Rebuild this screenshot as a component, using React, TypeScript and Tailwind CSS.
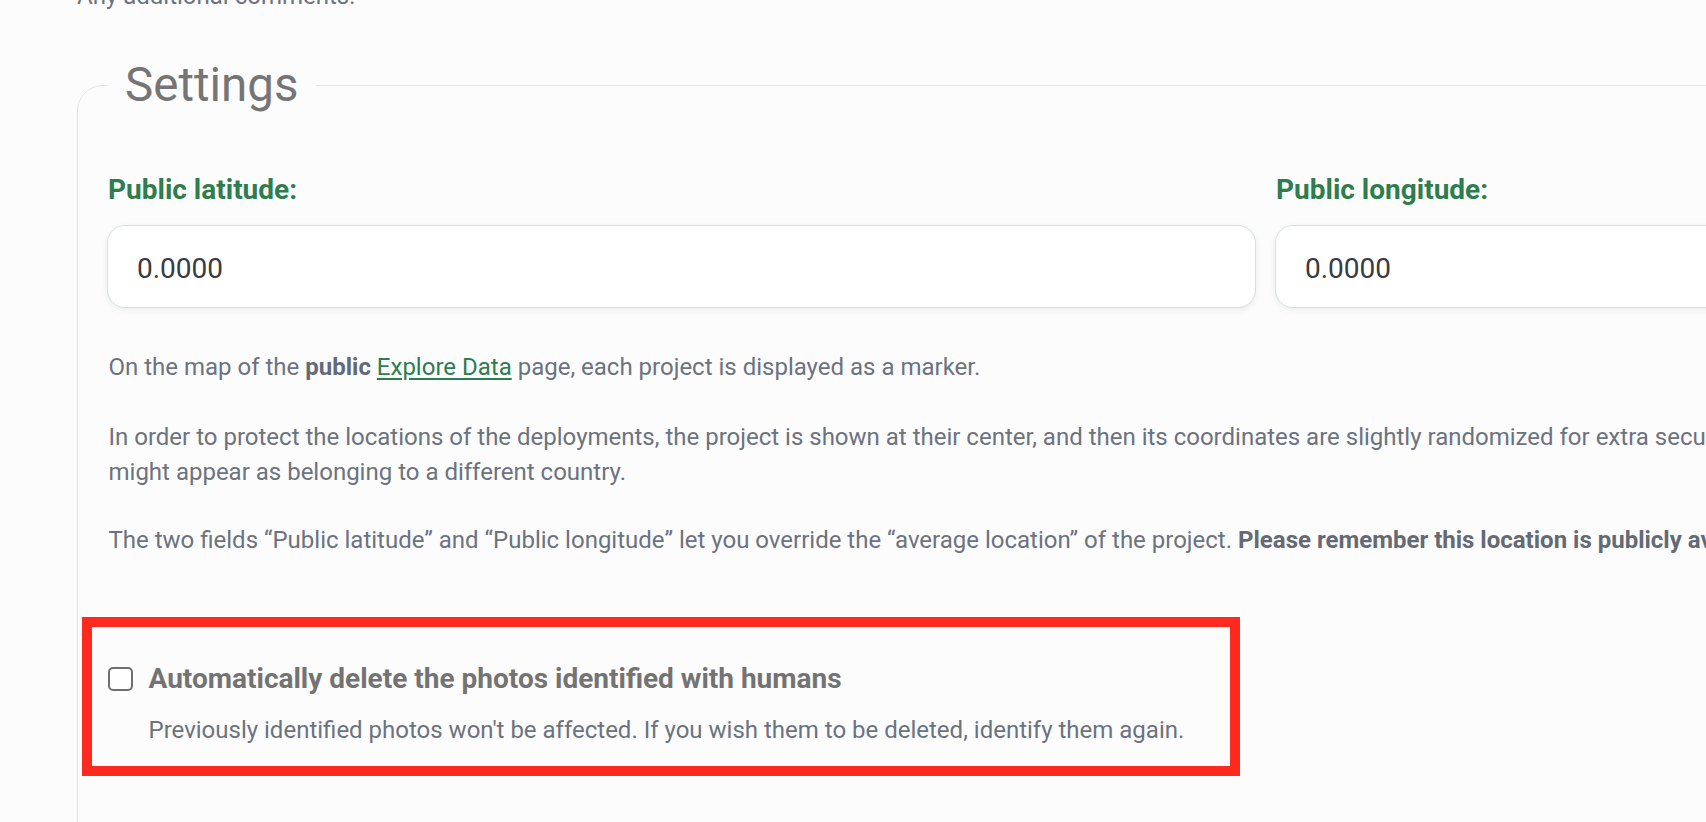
import React from "react";

export default function App() {
  return (
    <div className="w-[1706px] h-[822px] overflow-hidden bg-[#fcfcfc] font-['Roboto','Liberation_Sans',sans-serif]">
      <div className="w-[2600px] pl-[77px]">
        <div className="-mt-[21px] pl-0 text-[24px] leading-[35px] text-[#6b7280]">
          Any additional comments:
        </div>
        <fieldset className="mt-[42px] w-[2380px] border-[1.5px] border-[#e4e4e4] rounded-tl-[26px] pl-[29px] pr-[29px] pb-[200px]">
          <legend className="px-[18px] text-[47.5px] leading-[58px] font-normal text-[#757575]">
            Settings
          </legend>
          <div className="pt-[55px] grid grid-cols-2 gap-x-[19px] w-[2317px]">
            <div className="flex flex-col">
              <label className="pl-[1px] text-[28px] leading-[42px] font-bold text-[#2e7d4e]">
                Public latitude:
              </label>
              <div className="mt-[14px] h-[83px] rounded-[18px] border border-[#d3e2de] bg-white shadow-[0_2px_6px_rgba(0,0,0,0.07)] flex items-center pl-[29px] pt-[4px] text-[28px] text-[#3a3a3f]">
                0.0000
              </div>
            </div>
            <div className="flex flex-col">
              <label className="pl-[1px] text-[28px] leading-[42px] font-bold text-[#2e7d4e]">
                Public longitude:
              </label>
              <div className="mt-[14px] h-[83px] rounded-[18px] border border-[#d3e2de] bg-white shadow-[0_2px_6px_rgba(0,0,0,0.07)] flex items-center pl-[29px] pt-[4px] text-[28px] text-[#3a3a3f]">
                0.0000
              </div>
            </div>
          </div>
          <div className="pl-[1.5px] text-[24px] leading-[35px] text-[#6b7280]">
            <p className="mt-[42px]">
              On the map of the <strong className="font-bold text-[#636a75]">public</strong>{" "}
              <a href="#" className="text-[#2e7d4e] underline underline-offset-[3px]">
                Explore Data
              </a>{" "}
              page, each project is displayed as a marker.
            </p>
            <p className="mt-[35px] whitespace-nowrap">
              In order to protect the locations of the deployments, the project is shown at their center, and then its coordinates are slightly randomized for extra security. As a result, a project near a border
              <br />
              might appear as belonging to a different country.
            </p>
            <p className="mt-[33px] whitespace-nowrap">
              The two fields “Public latitude” and “Public longitude” let you override the “average location” of the project.{" "}
              <strong className="font-bold text-[#636a75]">Please remember this location is publicly available.</strong>
            </p>
          </div>
          <div className="relative mt-[103px]">
            <div className="flex items-center h-[35px]">
              <span className="ml-[0.5px] w-[25px] h-[24px] rounded-[5px] border-2 border-[#6f6f6f] bg-white shrink-0" />
              <span className="ml-[16px] text-[28px] leading-[35px] font-bold text-[#737373]">
                Automatically delete the photos identified with humans
              </span>
            </div>
            <p className="mt-[17px] pl-[41.5px] text-[24px] leading-[35px] text-[#6b7280]">
              Previously identified photos won't be affected. If you wish them to be deleted, identify them again.
            </p>
            <div className="absolute -top-[44.5px] -left-[25.5px] w-[1158px] h-[159px] border-[10px] border-[#ff2a1f] pointer-events-none" />
          </div>
        </fieldset>
      </div>
    </div>
  );
}
